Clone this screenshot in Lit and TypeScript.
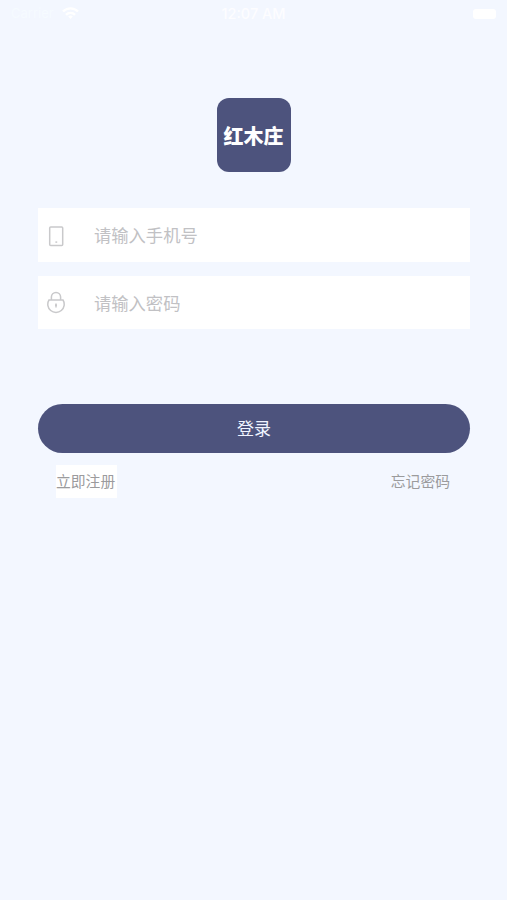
import { LitElement, html, css, svg } from "lit";
import { customElement, property } from "lit/decorators.js";

const phoneIcon = svg`<rect x="2.7" y="3" width="13" height="18.4" rx="1"/><path d="M8.4 18.1h1.8"/>`;
const lockIcon = svg`<path d="M4.4 9V6.1a4.6 4.6 0 0 1 9.2 0V9"/><path d="M2 9h14a8.2 8.2 0 1 1-14 0z"/><path d="M9 12.4v4.2M8 14.3h2"/>`;

@customElement("status-bar")
class StatusBar extends LitElement {
  static styles = css`
    :host {
      display: grid;
      grid-template-columns: 1fr auto 1fr;
      align-items: center;
      height: 27px;
      padding: 0 11px;
      color: #fff;
      font: 14.5px/27px "Inter", sans-serif;
    }
    .left { display: flex; align-items: center; gap: 5px; }
    .carrier { color: #f6fbff; font-size: 13px; width: 46px; }
    .time { font-weight: 500; color: #fdfdff; }
    .battery { justify-self: end; width: 23px; height: 10px; border-radius: 3px; background: #fff; }
    svg { display: block; }
  `;
  render() {
    return html`
      <div class="left">
        <span class="carrier">Carrier</span>
        <svg width="17" height="13" viewBox="0 0 17 13" fill="none" stroke="#fff" stroke-width="2.4">
          <path d="M1 4.5a10.5 10.5 0 0 1 15 0M4 7.8a6.3 6.3 0 0 1 9 0" />
          <path d="M6.2 9.6L8.5 12l2.3-2.4a3.2 3.2 0 0 0-4.6 0z" fill="#fff" stroke="none" />
        </svg>
      </div>
      <span class="time">12:07 AM</span>
      <span class="battery"></span>
    `;
  }
}

@customElement("login-field")
class LoginField extends LitElement {
  @property() label = "";
  @property() kind = "phone";
  static styles = css`
    :host { display: flex; align-items: center; background: #fff; padding-left: 9px; box-sizing: border-box; }
    svg { flex: none; margin-right: 28px; fill: none; stroke: #c9c9cb; stroke-width: 1.5; }
    .label { font-size: 17.3px; line-height: 24px; color: #c1c1c4; }
  `;
  render() {
    return html`
      <svg width="19" height="23" viewBox="0 0 19 23">${this.kind === "phone" ? phoneIcon : lockIcon}</svg>
      <span class="label">${this.label}</span>
    `;
  }
}

@customElement("app-root")
class AppRoot extends LitElement {
  static styles = css`
    :host {
      display: flex;
      flex-direction: column;
      height: 900px;
      background: #f3f7ff;
      font-family: "Noto Sans CJK SC", sans-serif;
    }
    .logo {
      align-self: center;
      display: flex;
      align-items: center;
      justify-content: center;
      box-sizing: border-box;
      width: 74px;
      height: 74px;
      margin: 71px 0 36px;
      padding-top: 2px;
      border-radius: 12px;
      background: #4d537d;
      color: #fff;
      font-size: 20px;
      font-weight: 900;
      line-height: 24px;
    }
    .form { display: flex; flex-direction: column; margin: 0 37px 0 38px; }
    .phone { height: 54px; margin-bottom: 14px; }
    .password { height: 53px; }
    .submit {
      height: 49px;
      margin-top: 75px;
      padding: 0 0 1px;
      border: 0;
      border-radius: 25px;
      background: #4d537d;
      color: #f0f3ff;
      font: 17px/24px "Noto Sans CJK SC", sans-serif;
    }
    .links { display: flex; justify-content: space-between; margin-top: 12px; padding: 0 20px 0 18px; font-size: 14.8px; line-height: 32px; color: #9b9b9d; }
    .register { width: 61px; height: 33px; background: #fff; }
  `;
  render() {
    return html`
      <status-bar></status-bar>
      <div class="logo">红木庄</div>
      <div class="form">
        <login-field class="phone" kind="phone" label="请输入手机号"></login-field>
        <login-field class="password" kind="password" label="请输入密码"></login-field>
        <button class="submit">登录</button>
        <div class="links">
          <span class="register">立即注册</span>
          <span>忘记密码</span>
        </div>
      </div>
    `;
  }
}
